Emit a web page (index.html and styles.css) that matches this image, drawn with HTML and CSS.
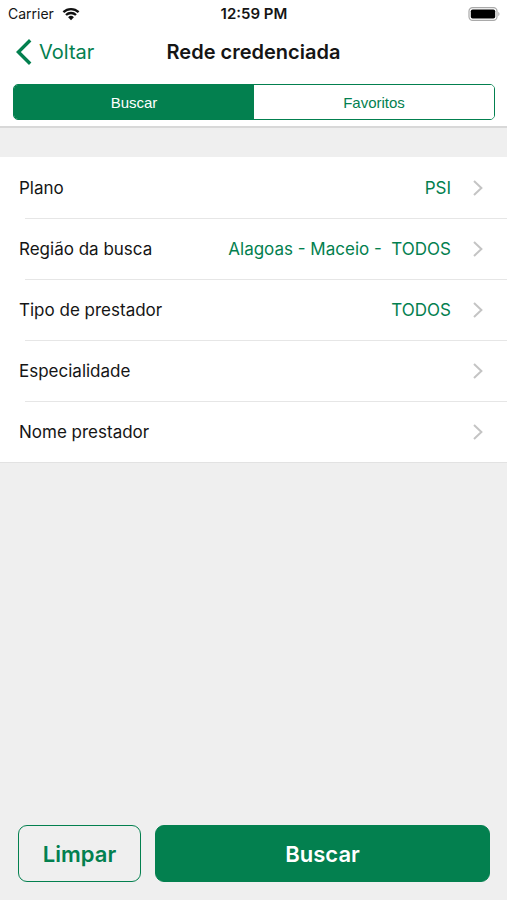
FILE: index.html
```html
<!DOCTYPE html>
<html lang="pt-BR">
<head>
<meta charset="UTF-8">
<meta name="viewport" content="width=device-width, initial-scale=1.0">
<title>Rede credenciada</title>
<link rel="stylesheet" href="styles.css">
</head>
<body>

<div id="app">
  <header id="topbar">
    <div id="statusbar">
      <div class="carrier">
        <span>Carrier</span>
        <svg width="18" height="14" viewBox="0 0 18 14" aria-hidden="true">
          <path d="M1.4 5.1a11 11 0 0 1 15.2 0M4 8a7.2 7.2 0 0 1 10 0" fill="none" stroke="#111" stroke-width="2.3"/>
          <path d="M9 13.2 6.1 10.2a4.2 4.2 0 0 1 5.8 0z" fill="#111"/>
        </svg>
      </div>
      <time>12:59 PM</time>
      <svg class="battery" width="32" height="14" viewBox="0 0 32 14" aria-hidden="true">
        <rect x="1" y="0.6" width="28" height="12.8" rx="3.6" fill="none" stroke="#a9a9a9" stroke-width="1.2"/>
        <rect x="2.8" y="2.4" width="24.4" height="9.2" rx="1.8" fill="#000"/>
        <path d="M30.3 4.8c1.6.8 1.6 3.6 0 4.4z" fill="#a9a9a9"/>
      </svg>
    </div>

    <nav id="navbar">
      <a class="back" href="#">
        <svg width="16" height="26" viewBox="0 0 16 26" aria-hidden="true">
          <path d="M14.2 1.3 2.4 13l11.8 11.7" fill="none" stroke="#03804f" stroke-width="3.4"/>
        </svg>
        <span>Voltar</span>
      </a>
      <h1>Rede credenciada</h1>
    </nav>

    <div class="segmented">
      <button class="active" type="button" aria-pressed="true">Buscar</button>
      <button type="button" aria-pressed="false">Favoritos</button>
    </div>
  </header>

  <main id="filters">
    <button class="row" type="button">
      <span class="label">Plano</span>
      <span class="value">PSI</span>
      <svg class="chevron" width="10" height="16" viewBox="0 0 10 16" aria-hidden="true"><path d="M1 1l7.4 7L1 15"/></svg>
    </button>
    <button class="row" type="button">
      <span class="label">Região da busca</span>
      <span class="value">Alagoas - Maceio -  TODOS</span>
      <svg class="chevron" width="10" height="16" viewBox="0 0 10 16" aria-hidden="true"><path d="M1 1l7.4 7L1 15"/></svg>
    </button>
    <button class="row" type="button">
      <span class="label">Tipo de prestador</span>
      <span class="value">TODOS</span>
      <svg class="chevron" width="10" height="16" viewBox="0 0 10 16" aria-hidden="true"><path d="M1 1l7.4 7L1 15"/></svg>
    </button>
    <button class="row" type="button">
      <span class="label">Especialidade</span>
      <svg class="chevron" width="10" height="16" viewBox="0 0 10 16" aria-hidden="true"><path d="M1 1l7.4 7L1 15"/></svg>
    </button>
    <button class="row" type="button">
      <span class="label">Nome prestador</span>
      <svg class="chevron" width="10" height="16" viewBox="0 0 10 16" aria-hidden="true"><path d="M1 1l7.4 7L1 15"/></svg>
    </button>
  </main>

  <footer id="actions">
    <button class="btn outline" type="button">Limpar</button>
    <button class="btn primary" type="button">Buscar</button>
  </footer>
</div>

</body>
</html>
```
FILE: styles.css
```css
* { margin: 0; padding: 0; box-sizing: border-box; }

body {
  font-family: Inter, "Liberation Sans", sans-serif;
  background: #efefef;
  color: #151515;
}

button { font-family: inherit; cursor: pointer; }

#app {
  min-height: 100vh;
  display: flex;
  flex-direction: column;
}

#topbar {
  background: #fff;
  border-bottom: 2px solid #d8d8d8;
}

#statusbar {
  display: grid;
  grid-template-columns: 1fr auto 1fr;
  align-items: center;
  height: 27px;
  padding: 0 7px 0 8px;
  font-size: 14px;
}

.carrier { display: flex; align-items: center; gap: 8px; }
#statusbar time { font-size: 15px; font-weight: 600; }
.battery { justify-self: end; }

#navbar {
  display: grid;
  grid-template-columns: 1fr auto 1fr;
  align-items: center;
  height: 50px;
  padding: 0 16px;
}

.back {
  display: flex;
  align-items: center;
  gap: 7px;
  font-size: 20px;
  color: #03804f;
  text-decoration: none;
}

#navbar h1 { font-size: 20px; font-weight: 600; }

.segmented {
  display: flex;
  height: 36px;
  margin: 7px 12px 6px 13px;
  border: 1px solid #03804f;
  border-radius: 5px;
  overflow: hidden;
}

.segmented button {
  flex: 1;
  border: none;
  background: #fff;
  color: #03804f;
  font-family: "Liberation Sans", Arial, sans-serif;
  font-size: 15px;
}
.segmented button.active { background: #03804f; color: #fff; }

#filters {
  margin-top: 29px;
  background: #fff;
  border-bottom: 1px solid #e2e2e2;
}

.row {
  position: relative;
  display: flex;
  align-items: center;
  width: 100%;
  height: 61px;
  padding: 0 24px 0 19px;
  border: none;
  background: none;
  color: inherit;
  font-size: 17px;
  text-align: left;
}

/* inset separator */
.row + .row::before {
  content: "";
  position: absolute;
  top: 0;
  left: 25px;
  right: 0;
  height: 1px;
  background: #e6e6e6;
}

.label { flex: 1; }
.value { color: #03804f; white-space: pre; }

.chevron { margin-left: 22px; }
.chevron path { fill: none; stroke: #c4c4c4; stroke-width: 2; }

#actions {
  display: flex;
  gap: 14px;
  margin-top: auto;
  padding: 18px 17px 18px 18px;
}

.btn {
  height: 57px;
  border: 1px solid #03804f;
  border-radius: 9px;
  font-size: 22px;
  font-weight: 600;
}
.btn.outline { flex: 4; background: none; color: #03804f; }
.btn.primary { flex: 11; background: #03804f; color: #fff; }
```
